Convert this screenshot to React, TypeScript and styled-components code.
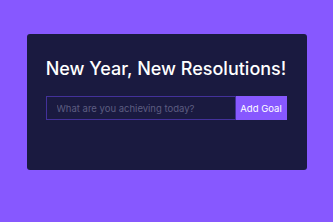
import styled, { createGlobalStyle } from 'styled-components';

const GlobalStyle = createGlobalStyle`
  * {
    box-sizing: border-box;
  }
  html,
  body {
    margin: 0;
    padding: 0;
    height: 100%;
    background: #8758ff;
  }
  body {
    font-family: Inter, 'Noto Sans', sans-serif;
  }
`;

const App = () => {
  return (
    <>
      <GlobalStyle />
      <Page>
        <Wrapper>
          <Title>New Year, New Resolutions!</Title>
          <Form onSubmit={(e) => e.preventDefault()}>
            <Input type="text" placeholder="What are you achieving today?" />
            <Button type="submit">Add Goal</Button>
          </Form>
        </Wrapper>
      </Page>
    </>
  );
};

export default App;

const Page = styled.div`
  display: flex;
  justify-content: center;
  padding-top: 34px;
  min-height: 222px;
`;
const Wrapper = styled.div`
  width: 280px;
  height: 136px;
  padding: 23px 20px 0 19px;
  background: #1a1a40;
  border-radius: 3px;
  display: flex;
  flex-direction: column;
  align-items: center;
`;
const Title = styled.h1`
  margin: 0;
  font-size: 18px;
  font-weight: 500;
  line-height: 24px;
  color: #fff;
  white-space: nowrap;
`;
const Form = styled.form`
  display: flex;
  margin-top: 15px;
  width: 241px;
  height: 24px;
`;
const Input = styled.input`
  flex: 1;
  min-width: 0;
  height: 100%;
  padding: 0 10px;
  background: none;
  border: 1px solid #43319a;
  outline: none;
  color: #fff;
  font-family: Inter, 'Noto Sans', sans-serif;
  font-size: 9.5px;

  &::placeholder {
    color: #5d5d80;
  }
`;
const Button = styled.button`
  width: 51px;
  height: 100%;
  padding: 0;
  background: #8758ff;
  color: #fff;
  border: none;
  font-family: Inter, 'Noto Sans', sans-serif;
  font-size: 9.5px;
  cursor: pointer;
`;
